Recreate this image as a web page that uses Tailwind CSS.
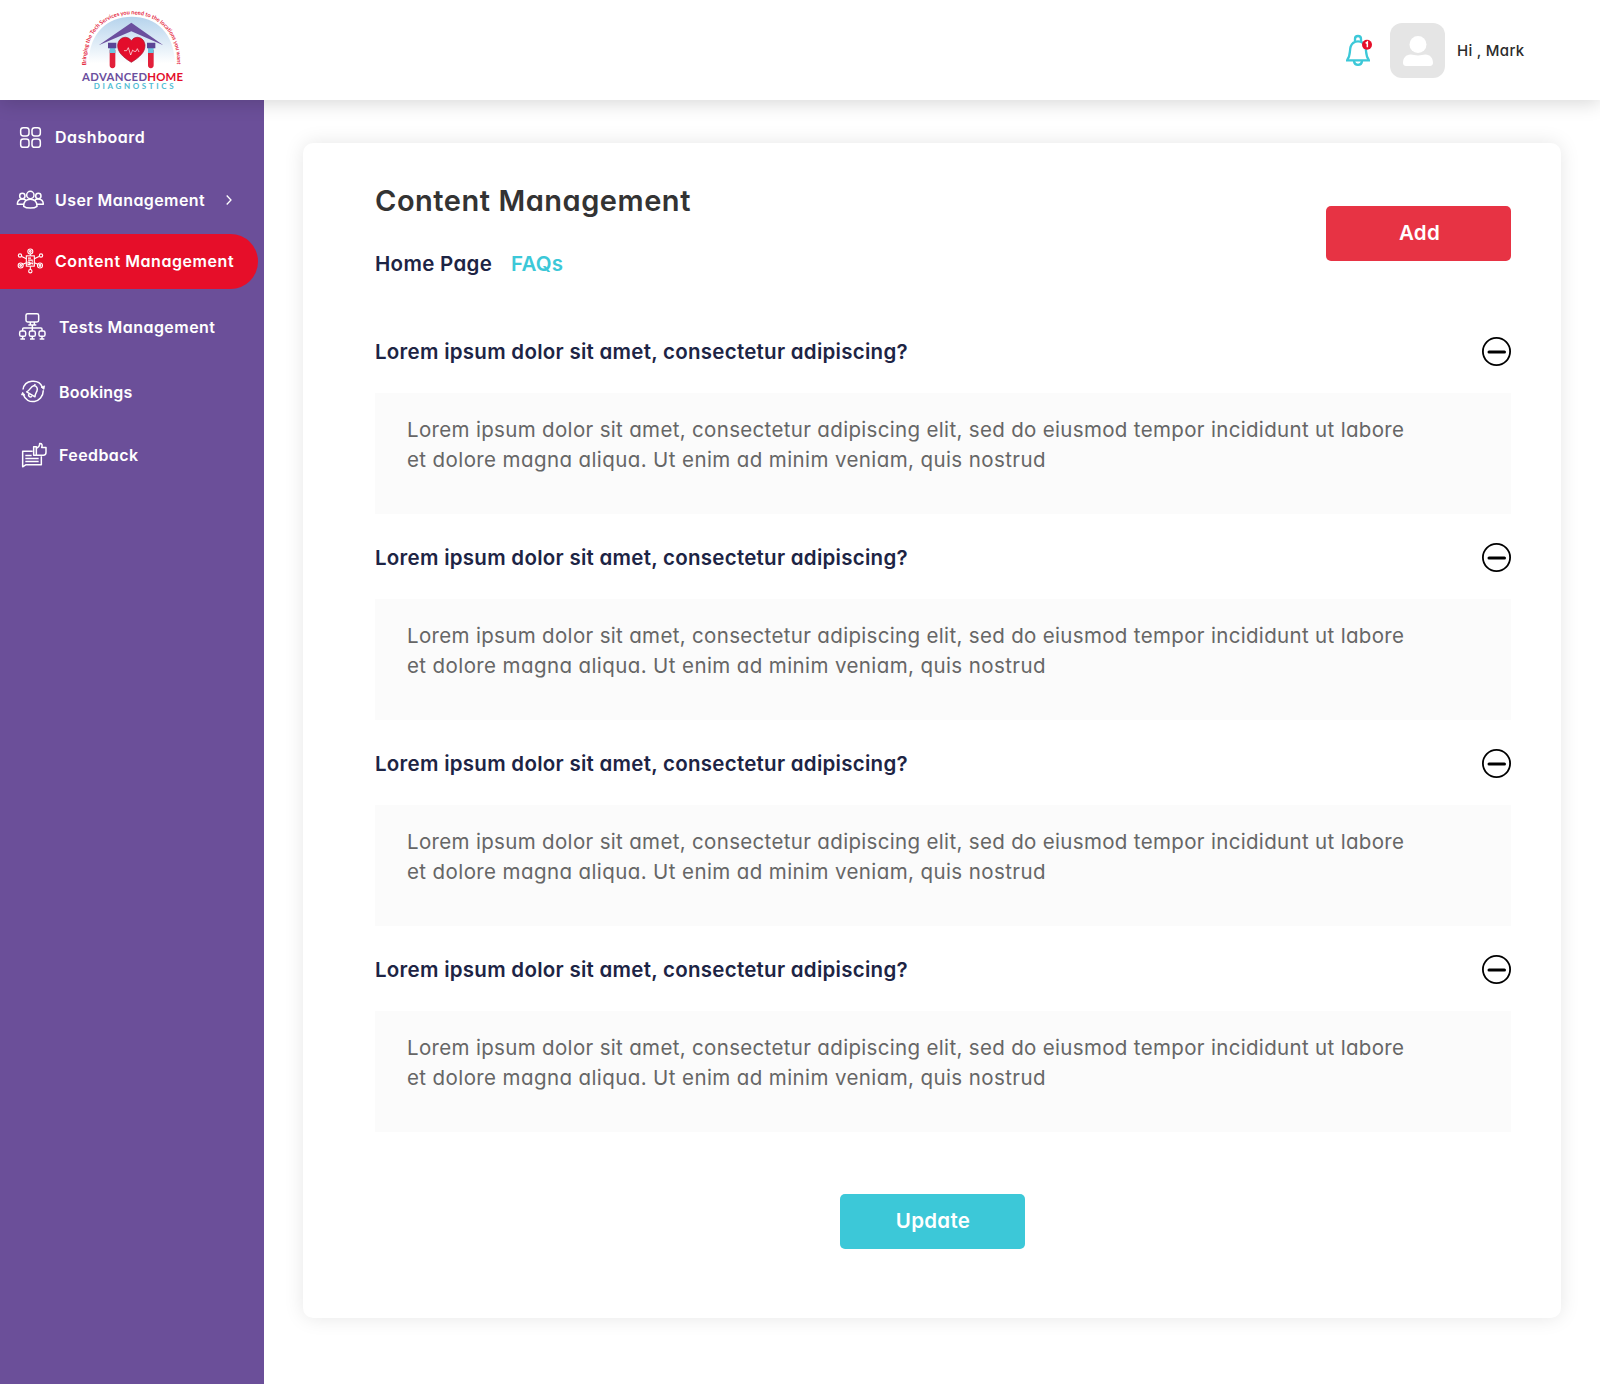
<!DOCTYPE html>
<html lang="en">
<head>
<meta charset="utf-8">
<title>Content Management</title>
<script src="https://cdn.jsdelivr.net/npm/@tailwindcss/browser@4"></script>
</head>
<body class="bg-white">
<div class="h-[1384px] w-[1600px] overflow-hidden font-['Inter',sans-serif] text-[#1d2444] [font-feature-settings:'cv11']">
  <header class="relative z-10 flex h-[100px] items-center justify-between bg-white pl-[70px] pr-[76px] shadow-[0_3px_18px_rgba(0,0,0,0.16)]">
    <svg class="h-[100px] w-[130px]" viewBox="0 0 390 300">
      <defs>
        <linearGradient id="sky" x1="0" y1="0" x2="0" y2="1"><stop offset="0" stop-color="#b5d3ec"/><stop offset="1" stop-color="#ffffff"/></linearGradient>
        <path id="arc" d="M49 196 C44 96 108 43 185 43 C262 43 326 96 321 196"/>
      </defs>
      <path d="M56 190 C56 100 112 50 185 50 C258 50 314 100 314 190Z" fill="url(#sky)"/>
      <text class="font-['Lato',sans-serif] font-bold" font-size="17" letter-spacing="-0.2" fill="#e4243c"><textPath href="#arc" textLength="462" lengthAdjust="spacing">Bringing the Tech Services you need to the locations you want</textPath></text>
      <path d="M86 136 L184 68 L280 136 L184 94Z" fill="#6b4f9e"/>
      <path d="M119 150h17v46a8 8 0 0 1-17 0zM234 150h17v46a8 8 0 0 1-17 0z" fill="#e2203a"/>
      <path d="M119 142h17v17h-17zM234 142h17v17h-17z" fill="#6cc5e0"/>
      <path d="M114 128h25v17h-25zM231 128h25v17h-25z" fill="#5b4596"/>
      <path d="M184 187 C160 172 142 157 143 135 C145 111 172 104 184 122 C196 104 223 111 225 135 C226 157 208 172 184 187Z" fill="#e30d2b" stroke="#a3142e" stroke-width="2"/>
      <path d="M162 152h8l5-9 7 22 6-15 4 4h6l4-8 5 10" fill="none" stroke="#fff" stroke-width="2"/>
      <g class="font-['Lato',sans-serif] font-bold">
        <text x="36" y="242" font-size="34" fill="#6b4f9e" textLength="195">ADVANCED</text>
        <text x="232" y="242" font-size="34" fill="#e30d2b" textLength="107">HOME</text>
        <text x="71" y="267" font-size="24" fill="#4fbcd3" textLength="240">DIAGNOSTICS</text>
      </g>
    </svg>
    <div class="flex items-center">
      <svg class="mr-5 h-[31px] w-6 overflow-visible" viewBox="0 0 72 93" fill="none" stroke="#3cc8d8" stroke-width="7">
        <path d="M27 19v-7c0-12 18-12 18 0v7"/>
        <path d="M4 74 C14 62 10 48 14 35 C18 23 26 19 36 19 C46 19 54 23 58 35 C62 48 58 62 68 74"/>
        <path d="M0 76h72M24 79c2 14 22 14 24 0"/>
        <circle cx="63" cy="29" r="15" fill="#e60e29" stroke="none"/>
        <path d="M59 25l5-4v16" stroke="#fff" stroke-width="4.500"/>
      </svg>
      <svg class="mr-3 size-[55px]" viewBox="0 0 55 55"><rect width="55" height="55" rx="12" fill="#e5e5e5"/><circle cx="28" cy="21.500" r="8.500" fill="#fff"/><path d="M13 40c0-5 3-8.500 7.500-8.500 3 0 4 1 7.500 1s4.500-1 7.500-1c4.500 0 7.500 3.500 7.500 8.500 0 2-1.500 3-3 3h-24c-1.500 0-3-1-3-3z" fill="#fff"/></svg>
      <span class="w-[67px] whitespace-pre pt-0.5 text-[15px] font-medium tracking-[0.300px] text-[#2b2b2b]">Hi , Mark</span>
    </div>
  </header>
  <div class="flex h-[1284px]">
    <aside class="flex w-[264px] shrink-0 flex-col whitespace-nowrap bg-[#6b4f99] text-base font-semibold text-white">
      <a class="flex h-[74px] items-center">
        <svg class="h-[30px] w-[55px]" viewBox="0 66 165 90" fill="none" stroke="#fff" stroke-width="4.500"><rect x="62" y="83" width="25" height="25" rx="8"/><rect x="96" y="83" width="25" height="25" rx="8"/><rect x="62" y="117" width="25" height="25" rx="8"/><rect x="96" y="117" width="25" height="25" rx="8"/></svg>
        <span class="tracking-[0.500px]">Dashboard</span>
      </a>
      <a class="flex h-[52px] items-center">
        <svg class="h-[30px] w-[55px]" viewBox="0 254 165 90" fill="none" stroke="#fff" stroke-width="4.500" stroke-linejoin="round"><circle cx="91" cy="284" r="11"/><circle cx="67" cy="287" r="8"/><circle cx="115" cy="287" r="8"/><path d="M71 318c0-14 8-21 20-21s20 7 20 21c-8 7-32 7-40 0zM70 312H52c0-10 6-16 16-16 4 0 7 1 9 3M112 312h18c0-10-6-16-16-16-4 0-7 1-9 3"/></svg>
        <span class="w-[171px] tracking-[0.430px]">User Management</span>
        <svg class="h-[10px] w-[6px]" viewBox="0 0 6 10" fill="none" stroke="#fff" stroke-width="1.300"><path d="M.7.5 5 5 .7 9.500"/></svg>
      </a>
      <a class="mt-2 flex h-[55px] w-[258px] items-center rounded-r-full bg-[#e60e29] pb-px">
        <svg class="h-[30px] w-[55px]" viewBox="0 79.500 165 90" fill="none" stroke="#fff" stroke-width="3.300"><rect x="79" y="109" width="24" height="31"/><path d="M84 116h9M84 122h14M84 135v-7h5v7zM92 135v-4h6v4M97 127v-3M91 103v6M91 140v10M79 118l-14-7M103 118l14-7M79 130l-12 5M103 130l12 5"/><circle cx="91" cy="96" r="7.500"/><circle cx="91" cy="96" r="2.500"/><circle cx="60" cy="108" r="5"/><circle cx="123" cy="108" r="5"/><circle cx="62" cy="138" r="7.500"/><circle cx="62" cy="138" r="2.500"/><circle cx="120" cy="138" r="7.500"/><circle cx="120" cy="138" r="2.500"/><circle cx="91" cy="155" r="5"/></svg>
        <span class="tracking-[0.560px]">Content Management</span>
      </a>
      <a class="flex h-[76px] items-center pb-px">
        <svg class="h-[30px] w-[59px]" viewBox="0 276 177 90" fill="none" stroke="#fff" stroke-width="4.500"><rect x="78" y="281" width="38" height="25" rx="5"/><path d="M91 306v8M103 306v8M85 315h24M97 315v18M68 333v-6c0-2 1-3 3-3h52c2 0 3 1 3 3v6M68 350v6M97 350v6M126 350v6M61 357h14M90 357h14M119 357h14"/><rect x="59" y="333" width="18" height="16" rx="5"/><rect x="88" y="333" width="18" height="16" rx="5"/><rect x="117" y="333" width="18" height="16" rx="5"/></svg>
        <span class="tracking-[0.450px]">Tests Management</span>
      </a>
      <a class="flex h-[55px] items-center pb-px">
        <svg class="h-[30px] w-[59px]" viewBox="0 81.500 177 90" fill="none" stroke="#fff" stroke-width="4.500" stroke-linejoin="round"><path d="M69 119c5-30 47-33 58-7M130 121c-1 40-50 46-60 13"/><path d="M123 112l9 7 2-11zM64 135l4-8 7 9z" fill="#fff" stroke-width="2"/><path d="M80 126c10-4 12-16 21-18 9-1 13 8 10 15-3 7-6 10-6 18zM103 107l3-4M86 133c-2 7 5 11 10 6"/></svg>
        <span class="tracking-[0.200px]">Bookings</span>
      </a>
      <a class="flex h-[71px] items-center pb-px">
        <svg class="h-[30px] w-[59px]" viewBox="0 270.500 177 90" fill="none" stroke="#fff" stroke-width="4.500" stroke-linejoin="round"><path d="M98 304H68v47l9-6h47v-26M76 317h19M76 326h40M76 335h40"/><rect x="101" y="291" width="8" height="25"/><path d="M109 295c6-2 10-7 10-14 7-1 9 5 6 12h13v14c0 6-3 9-8 9h-21"/></svg>
        <span class="tracking-[0.400px]">Feedback</span>
      </a>
    </aside>
    <main class="pl-[39px] pt-[43px]">
      <section class="h-[1175px] w-[1258px] rounded-[10px] bg-white pl-[72px] pr-[50px] pt-[37px] shadow-[0_0_20px_rgba(0,0,0,0.1)]">
        <div class="flex items-start justify-between">
          <div>
            <h1 class="text-[29px]/[41px] font-semibold tracking-[0.530px] text-[#333]">Content Management</h1>
            <nav class="mt-7 flex text-[20.500px]/[30px] font-semibold">
              <a class="w-[136px] tracking-[0.310px]">Home Page</a>
              <a class="tracking-[0.200px] text-[#3cc8d8]">FAQs</a>
            </nav>
          </div>
          <button class="mt-[26px] h-[55px] w-[185px] rounded-[5px] bg-[#e73344] pl-0.5 text-[20.500px] font-semibold tracking-[0.300px] text-white">Add</button>
        </div>
        <div id="faqs" class="mt-[58px] flex flex-col gap-[29px]">
          <article>
            <div class="flex h-[30px] items-start justify-between">
              <h2 class="text-[20.500px]/[30px] font-semibold tracking-[0.270px]">Lorem ipsum dolor sit amet, consectetur adipiscing?</h2>
              <svg class="size-[29px]" viewBox="0 0 29 29" fill="none" stroke="#000"><circle cx="14.500" cy="14.500" r="13.600" stroke-width="1.800"/><path d="M7 15h15.500" stroke-width="3" stroke-linecap="round"/></svg>
            </div>
            <div class="mt-[26px] h-[121px] whitespace-nowrap bg-[#fbfbfb] pl-8 pt-[22px] text-[20.500px]/[30px] text-[#666]">
              <p class="tracking-[0.330px]">Lorem ipsum dolor sit amet, consectetur adipiscing elit, sed do eiusmod tempor incididunt ut labore</p>
              <p class="tracking-[0.400px]">et dolore magna aliqua. Ut enim ad minim veniam, quis nostrud</p>
            </div>
          </article>
        </div>
        <div class="mt-[62px] flex justify-center pr-[22px]">
          <button class="h-[55px] w-[185px] rounded-[5px] bg-[#3cc8d8] pl-0.5 text-[20.500px] font-semibold tracking-[0.300px] text-white">Update</button>
        </div>
      </section>
    </main>
  </div>
</div>
<script>
const faqs = document.getElementById('faqs');
const item = faqs.firstElementChild;
for (let i = 0; i < 3; i++) faqs.append(item.cloneNode(true));
</script>
</body>
</html>
